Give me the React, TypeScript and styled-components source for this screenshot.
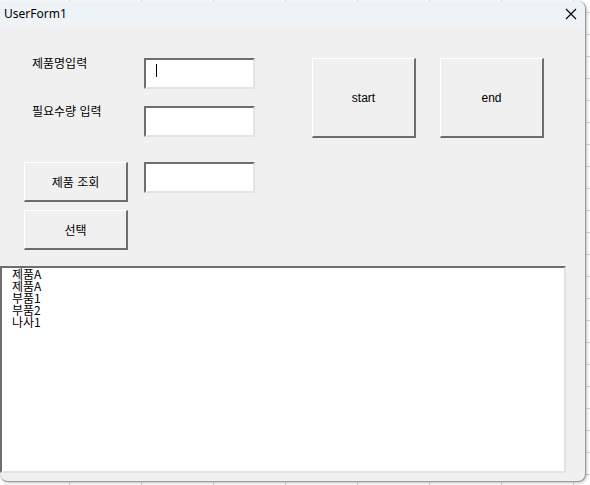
import styled, { createGlobalStyle } from "styled-components"

const GlobalStyle = createGlobalStyle`
    html, body {
        margin: 0;
        padding: 0;
    }
    body {
        width: 590px;
        height: 485px;
        overflow: hidden;
        background-color: #ffffff;
        background-image:
            linear-gradient(to right, #d4d4d4 1px, transparent 1px),
            linear-gradient(to bottom, #d4d4d4 1px, transparent 1px);
        background-size: 72px 22px;
        background-position: -3px 12px;
        font-family: "Liberation Sans", "Noto Sans CJK KR", sans-serif;
    }
`

const Window = styled.div`
    width: 586px;
    height: 481px;
    margin-top: 1px;
    box-sizing: border-box;
    background: #f0f0f0;
    border-right: 1px solid #9a9a9a;
    border-bottom: 1px solid #9a9a9a;
    border-radius: 0 8px 8px 8px;
    box-shadow: 1px 1px 3px rgba(0, 0, 0, 0.25);
    overflow: hidden;
    display: flex;
    flex-direction: column;
`
const TitleBar = styled.div`
    height: 25px;
    flex-shrink: 0;
    background: #eef3f8;
    border-top-right-radius: 8px;
    display: flex;
    align-items: center;
    justify-content: space-between;
    padding: 0 6px 0 4px;
`
const TitleText = styled.span`
    font-family: "Noto Sans", sans-serif;
    font-size: 12px;
    color: #000;
`
const CloseIcon = styled.svg`
    width: 12px;
    height: 12px;
    margin-right: 2px;
`
const FormBody = styled.div`
    flex: 1;
    display: flex;
    flex-direction: column;
`
const TopArea = styled.div`
    display: flex;
    align-items: flex-start;
    padding: 32px 0 16px 24px;
`
const LeftColumn = styled.div`
    display: flex;
    flex-direction: column;
`
const FieldRow = styled.div<{ $gap: number }>`
    display: flex;
    gap: 16px;
    margin-top: ${(p) => p.$gap}px;
`
const LabelCell = styled.div`
    width: 104px;
    padding: 0 0 0 8px;
    box-sizing: border-box;
    font-size: 12px;
    line-height: 14px;
    color: #000;
    margin-top: -1px;
`
const TextBox = styled.div`
    position: relative;
    width: 111px;
    height: 31px;
    box-sizing: border-box;
    background: #fff;
    border-top: 2px solid #6e6e6e;
    border-left: 2px solid #6e6e6e;
    border-right: 2px solid #e3e3e3;
    border-bottom: 2px solid #e3e3e3;
`
const Caret = styled.span`
    position: absolute;
    left: 10px;
    top: 4px;
    width: 1px;
    height: 13px;
    background: #000;
`
const Button = styled.div<{ $w: number; $h: number }>`
    width: ${(p) => p.$w}px;
    height: ${(p) => p.$h}px;
    box-sizing: border-box;
    background: #f0f0f0;
    border-top: 1px solid #ffffff;
    border-left: 1px solid #ffffff;
    border-right: 2px solid #6e6e6e;
    border-bottom: 2px solid #6e6e6e;
    display: flex;
    align-items: center;
    justify-content: center;
    font-size: 12px;
    color: #000;
`
const RightButtons = styled.div`
    display: flex;
    gap: 24px;
    margin-left: 57px;
`
const ListBox = styled.div`
    width: 566px;
    height: 207px;
    box-sizing: border-box;
    background: #fff;
    border-top: 2px solid #6e6e6e;
    border-left: 2px solid #6e6e6e;
    border-right: 2px solid #e3e3e3;
    border-bottom: 2px solid #e3e3e3;
    padding: 0 0 0 10px;
`
const ListItem = styled.div`
    font-size: 12px;
    line-height: 12px;
    color: #000;
    font-family: "Noto Sans CJK KR", sans-serif;
`

const items = ["제품A", "제품A", "부품1", "부품2", "나사1"]

export default function App() {
    return (
        <>
            <GlobalStyle />
            <Window>
                <TitleBar>
                    <TitleText>UserForm1</TitleText>
                    <CloseIcon viewBox="0 0 12 12">
                        <path d="M1 1 L11 11 M11 1 L1 11" stroke="#000" strokeWidth="1.1" fill="none" />
                    </CloseIcon>
                </TitleBar>
                <FormBody>
                    <TopArea>
                        <LeftColumn>
                            <FieldRow $gap={0}>
                                <LabelCell>제품명입력</LabelCell>
                                <TextBox>
                                    <Caret />
                                </TextBox>
                            </FieldRow>
                            <FieldRow $gap={17}>
                                <LabelCell>필요수량 입력</LabelCell>
                                <TextBox />
                            </FieldRow>
                            <FieldRow $gap={25}>
                                <Button $w={104} $h={40}>제품 조회</Button>
                                <TextBox />
                            </FieldRow>
                            <FieldRow $gap={8}>
                                <Button $w={104} $h={40}>선택</Button>
                            </FieldRow>
                        </LeftColumn>
                        <RightButtons>
                            <Button $w={104} $h={80}>start</Button>
                            <Button $w={104} $h={80}>end</Button>
                        </RightButtons>
                    </TopArea>
                    <ListBox>
                        {items.map((item, i) => (
                            <ListItem key={i}>{item}</ListItem>
                        ))}
                    </ListBox>
                </FormBody>
            </Window>
        </>
    )
}
